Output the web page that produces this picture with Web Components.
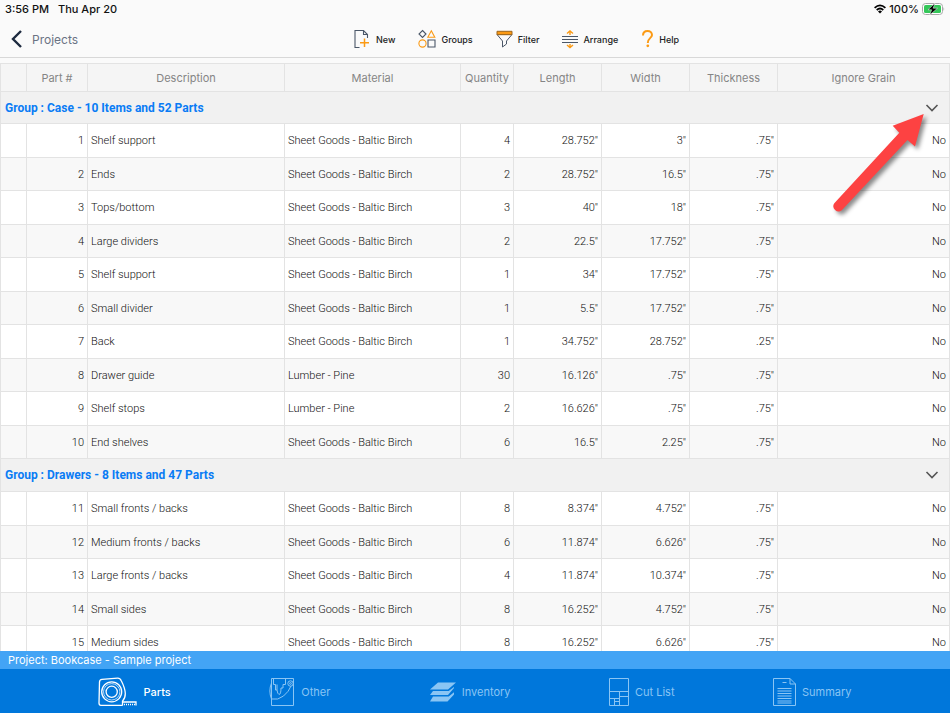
<!DOCTYPE html>
<html lang="en">
<head>
<meta charset="utf-8">
<title>Parts</title>
<style>
html, body { height: 100%; margin: 0; }
body { font-family: Inter, "Liberation Sans", sans-serif; background: #fafafa; overflow: hidden; }
</style>
</head>
<body>
<parts-app></parts-app>

<template id="app-t">
<style>
:host { display: flex; flex-direction: column; height: 100vh; position: relative; }
parts-table { flex: 1; min-height: 0; margin-top: 5px; }
.arrow { position: absolute; right: 20px; top: 108px; width: 100px; height: 112px; pointer-events: none; overflow: visible; filter: drop-shadow(3px 3px 2px rgba(0,0,0,.45)); }
footer { flex: none; }
.project { background: #43a4f5; color: #fff; font-size: 11px; line-height: 18px; padding: 0 8px; }
nav { display: flex; justify-content: space-evenly; background: #0077db; height: 44px; }
</style>
<status-bar></status-bar>
<top-bar>
  <tool-button label="New"><svg width="18" height="20" viewBox="0 0 18 20" fill="none" stroke="#4b5768" stroke-width="1.1"><path d="M6.5 18.5H2V1.5H10.5L14.5 5.5V9M10.5 1.5V5.5H14.5"/><path d="M11.5 9.5V18M7 13.8H16" stroke="#fb9a14" stroke-width="1.5"/></svg></tool-button>
  <tool-button label="Groups"><svg width="18" height="20" viewBox="0 0 18 20" fill="none" stroke="#4b5768" stroke-width="1.1"><path d="M4.5 1.5L8 5L4.5 8.5L1 5ZM10 11H17V18H10Z"/><path d="M13.3 1.8L16.8 8.3H9.8Z" stroke="#fb9a14"/><circle cx="4.5" cy="14.5" r="3.6" stroke="#fb9a14"/></svg></tool-button>
  <tool-button label="Filter"><svg width="17" height="20" viewBox="0 0 17 20" fill="none" stroke="#4b5768"><path d="M1 5.5L6.5 12V18L10.5 15V12L16 5.5Z"/><path d="M1 2.3H16V5.7H1Z" fill="#fb9a14" stroke="#9c641c"/></svg></tool-button>
  <tool-button label="Arrange"><svg width="16" height="20" viewBox="0 0 16 20" fill="none" stroke="#fb9a14" stroke-width="1.4"><path d="M0 7.5H16M0 10.5H16M0 13.5H16" stroke="#4b5768" stroke-width="1.2"/><path d="M8 6V2M5 4.5L8 2L11 4.5M8 15V18.5M5 16L8 18.5L11 16"/></svg></tool-button>
  <tool-button label="Help"><svg width="13" height="20" viewBox="0 0 13 20" fill="none" stroke="#fb9a14" stroke-width="2"><path d="M2 6.5C2 3.5 4 2 6.5 2S11 3.6 11 6C11 9 6.8 9 6.8 14"/><circle cx="6.8" cy="16.8" r="1.4" fill="#fb9a14" stroke="none"/></svg></tool-button>
</top-bar>
<parts-table></parts-table>
<svg class="arrow" viewBox="830 108 100 112" aria-hidden="true"><path fill="#fd4242" d="M923.7 114L892.7 125.7L899.3 132.7L834.3 203.3A5.2 5.2 0 0 0 841.8 210.3L907.5 140L915 146.5Z"/></svg>
<footer>
  <div class="project">Project: Bookcase - Sample project</div>
  <nav>
    <tab-item label="Parts" active><svg width="39" height="30" viewBox="0 0 39 30" fill="none" stroke="currentColor" stroke-width="1.3"><path d="M1 26L1.5 5Q1.6 2.6 4 2.4L19.5 1.2Q22 1 23.4 4Q27 11 27.3 16.5Q27.4 21 24.5 24.2M1 26Q1 28.4 3 28.4H24.5"/><path d="M24.5 23.8V28.4M24.5 25H38V28.6"/><path d="M26 27.5H37" stroke-dasharray="1 1"/><circle cx="13.7" cy="14.8" r="10"/><circle cx="13.7" cy="14.8" r="8.2" stroke-width=".7"/><circle cx="13.7" cy="14.8" r="5.6"/></svg></tab-item>
    <tab-item label="Other"><svg width="26" height="30" viewBox="0 0 26 30" fill="none" stroke="currentColor"><path d="M2.5 1.5H24.5V28.5H2.5ZM2.5 6Q-.8 14 2.5 22Q9 23.5 14.5 19Q20 14.5 22 9"/><path d="M4.5 2V7.5H6.5V13H8V7.5M8 13Q8.5 17 10 17.5Q12 17.5 12 11H14V7.5H16.5V2"/><circle cx="21.5" cy="6.5" r="2.7"/><circle cx="21.5" cy="6.5" r=".9"/></svg></tab-item>
    <tab-item label="Inventory"><svg width="27" height="20" viewBox="0 0 27 20" fill="currentColor"><path d="M9 .5H27L19 7.5H1ZM4 9H19.7L25 4.9V6L19 13H1ZM4 14.5H19.7L25 10.2V12.5L18.5 19.5H1Z"/></svg></tab-item>
    <tab-item label="Cut List"><svg width="20" height="30" viewBox="0 0 20 30" fill="none" stroke="currentColor"><path d="M.5 1.5H19.5V28.5H.5ZM.5 14.5H19.5M10.5 14.5V28.5M10.5 19.5H19.5M.5 21.5H10.5M5.5 21.5V28.5M5.5 24.5H10.5"/></svg></tab-item>
    <tab-item label="Summary"><svg width="23" height="30" viewBox="0 0 23 30" fill="none" stroke="currentColor"><path d="M.5 1.5H17L22.5 7V28.5H.5ZM17 1.5V7H22.5M9.5 5.5H13.5M4.5 11.5H18.5M4.5 14H18.5M4.5 16.5H18.5M4.5 19H18.5M4.5 21.5H18.5M4.5 24H18.5M4.5 26H18.5"/></svg></tab-item>
  </nav>
</footer>
</template>

<template id="status-t">
<style>
:host { display: flex; align-items: center; height: 18px; padding: 0 5px; font-size: 11px; font-weight: 500; color: #111; gap: 9px; flex: none; }
.right { margin-left: auto; display: flex; align-items: center; gap: 3px; }
svg { display: block; }
</style>
<span>3:56 PM</span><span>Thu Apr 20</span>
<span class="right">
<svg width="12" height="10" viewBox="0 0 12 10" fill="none" stroke="#000" stroke-width="1.7"><path d="M.6 3.8Q6-1.2 11.4 3.8M2.7 6Q6 3 9.3 6"/><path d="M4 7.4Q6 5.8 8 7.4L6 9.5Z" fill="#000" stroke="none"/></svg>
<span>100%</span>
<svg width="23" height="12" viewBox="0 0 23 12"><rect x=".5" y=".5" width="20" height="11" rx="3" fill="#fff" stroke="#a8a8a8"/><rect x="2" y="2" width="17" height="8" rx="1.6" fill="#34c759"/><path d="M21.5 4Q23 6 21.5 8Z" fill="#a8a8a8"/><path d="M13 0L6 6.8H9.6L7.8 12L15.5 5.2H11.2Z" fill="#000" stroke="#fff" stroke-width=".5"/></svg>
</span>
</template>

<template id="top-t">
<style>
:host { display: flex; align-items: stretch; box-sizing: border-box; height: 40px; padding-top: 3px; border-bottom: 1px solid #d8d8d8; flex: none; }
button { font: inherit; font-size: 12px; color: #6a7384; background: none; border: 0; display: flex; align-items: center; gap: 10px; padding: 0 4px 0 11px; margin: 0; }
.tools { flex: 1; display: flex; justify-content: center; gap: 23px; }
svg { display: block; }
</style>
<button type="button"><svg width="11" height="18" viewBox="0 0 11 18" fill="none" stroke="#1d2a3f" stroke-width="2.4"><path d="M10 1L2 9L10 17"/></svg>Projects</button>
<div class="tools"><slot></slot></div>
</template>

<template id="tool-t">
<style>
:host { display: flex; }
button { font: inherit; font-size: 9px; font-weight: 500; color: #222; background: none; border: 0; padding: 0; display: flex; align-items: center; gap: 5px; }
</style>
<button type="button"><slot></slot><span></span></button>
</template>

<template id="tab-t">
<style>
:host { display: flex; color: #8ac5f4; }
:host([active]) { color: #fff; }
button { font: inherit; font-size: 11px; color: inherit; background: none; border: 0; padding: 2px 0 0; display: flex; align-items: center; gap: 6px; }
:host([active]) button { font-weight: 500; }
</style>
<button type="button"><slot></slot><span></span></button>
</template>

<template id="table-t">
<style>
:host { display: block; overflow: auto; scrollbar-width: none; background: #fff; }
table { width: 100%; table-layout: fixed; border-collapse: separate; border-spacing: 0; font-family: Roboto, "Liberation Sans", sans-serif; font-size: 11px; font-weight: 300; color: #111; }
th, td { box-sizing: border-box; padding: 0 3px; border-right: 1px solid #e3e3e3; border-bottom: 1px solid #e3e3e3; text-align: left; white-space: nowrap; }
tr > :first-child { border-left: 1px solid #e3e3e3; }
thead th { position: sticky; top: 0; height: 29px; background: #f5f5f5; border-top: 1px solid #e3e3e3; color: #858585; font: 400 11px Inter, sans-serif; text-align: center; padding: 0; }
.group th { height: 33px; background: #f1f1f1; padding: 0 10px 0 4px; }
.group.first th { height: 32px; }
.bar { display: flex; justify-content: space-between; align-items: center; color: #0a7cf5; font: 700 12px Roboto, sans-serif; }
.bar button { background: none; border: 0; padding: 0; display: flex; }
.item td { height: 34px; }
.item:nth-child(odd) td { height: 33px; background: #f8f8f8; }
.n { text-align: right; }
.c0 { width: 27px; } .c1 { width: 61px; } .c2 { width: 197px; } .c3 { width: 176px; } .c4 { width: 53px; } .c5, .c6, .c7 { width: 88px; }
</style>
<table>
<colgroup><col class="c0"><col class="c1"><col class="c2"><col class="c3"><col class="c4"><col class="c5"><col class="c6"><col class="c7"><col></colgroup>
<thead><tr><th></th><th>Part #</th><th>Description</th><th>Material</th><th>Quantity</th><th>Length</th><th>Width</th><th>Thickness</th><th>Ignore Grain</th></tr></thead>
</table>
</template>

<script>
const stamp = (el, id) => {
  const root = el.attachShadow({ mode: "open" });
  root.append(document.getElementById(id).content.cloneNode(true));
  return root;
};
const B = "Sheet Goods - Baltic Birch", P = "Lumber - Pine";
const groups = [
  { title: "Group : Case - 10 Items and 52 Parts", rows: [
    [1, "Shelf support", B, 4, "28.752", "3", ".75"],
    [2, "Ends", B, 2, "28.752", "16.5", ".75"],
    [3, "Tops/bottom", B, 3, "40", "18", ".75"],
    [4, "Large dividers", B, 2, "22.5", "17.752", ".75"],
    [5, "Shelf support", B, 1, "34", "17.752", ".75"],
    [6, "Small divider", B, 1, "5.5", "17.752", ".75"],
    [7, "Back", B, 1, "34.752", "28.752", ".25"],
    [8, "Drawer guide", P, 30, "16.126", ".75", ".75"],
    [9, "Shelf stops", P, 2, "16.626", ".75", ".75"],
    [10, "End shelves", B, 6, "16.5", "2.25", ".75"]] },
  { title: "Group : Drawers - 8 Items and 47 Parts", rows: [
    [11, "Small fronts / backs", B, 8, "8.374", "4.752", ".75"],
    [12, "Medium fronts / backs", B, 6, "11.874", "6.626", ".75"],
    [13, "Large fronts / backs", B, 4, "11.874", "10.374", ".75"],
    [14, "Small sides", B, 8, "16.252", "4.752", ".75"],
    [15, "Medium sides", B, 8, "16.252", "6.626", ".75"]] }
];
class PartsTable extends HTMLElement {
  constructor() {
    super();
    const table = stamp(this, "table-t").querySelector("table");
    groups.forEach((g, i) => {
      const body = document.createElement("tbody");
      body.innerHTML = `<tr class="group${i ? "" : " first"}"><th colspan="9" scope="rowgroup"><div class="bar"><span>${g.title}</span><button type="button" aria-label="Collapse group"><svg width="14" height="10" viewBox="0 0 14 10" fill="none" stroke="#555" stroke-width="1.6"><path d="M1.5 2L7 7.5L12.5 2"/></svg></button></div></th></tr>` +
        g.rows.map(([id, name, mat, qty, l, w, t]) => `<tr class="item"><td></td><td class="n">${id}</td><td>${name}</td><td>${mat}</td><td class="n">${qty}</td><td class="n">${l}"</td><td class="n">${w}"</td><td class="n">${t}"</td><td class="n">No</td></tr>`).join("");
      table.append(body);
    });
  }
}
class Labelled extends HTMLElement {
  connectedCallback() {
    if (this.shadowRoot) return;
    stamp(this, this.constructor.template).querySelector("span").textContent = this.getAttribute("label");
  }
}
customElements.define("tool-button", class extends Labelled { static template = "tool-t"; });
customElements.define("tab-item", class extends Labelled { static template = "tab-t"; });
customElements.define("status-bar", class extends HTMLElement { constructor() { super(); stamp(this, "status-t"); } });
customElements.define("top-bar", class extends HTMLElement { constructor() { super(); stamp(this, "top-t"); } });
customElements.define("parts-table", PartsTable);
customElements.define("parts-app", class extends HTMLElement { constructor() { super(); stamp(this, "app-t"); } });
</script>
</body>
</html>
